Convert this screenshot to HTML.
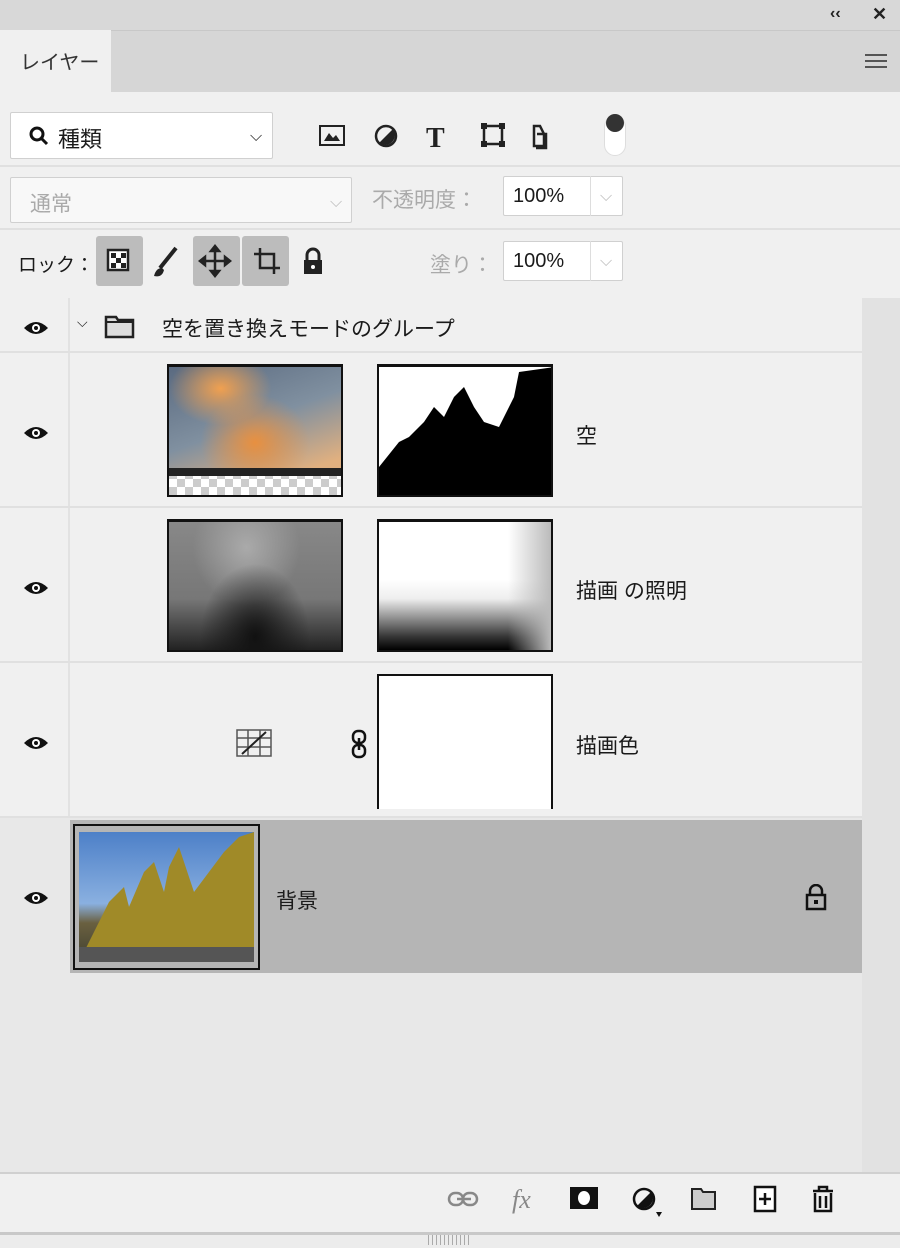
<!DOCTYPE html><html><head><meta charset="utf-8"><style>
*{margin:0;padding:0;box-sizing:border-box}
body{width:900px;height:1248px;background:#f0f0f0;font-family:"Liberation Sans","Noto Sans CJK JP",sans-serif;position:relative;overflow:hidden;color:#222}
.a{position:absolute}
.t{font-size:21px;color:#1a1a1a}
.box{background:#fff;border:1px solid #d0d0d0;border-radius:2px}
.eye{position:absolute;left:23px;width:26px;height:16px}
.hl{position:absolute;left:0;width:862px;height:2px;background:#e0e0e0}
</style></head><body>
<div class="a" style="left:0;top:0;width:900px;height:30px;background:#d8d8d8"></div>
<div class="a" style="left:830px;top:5px;font-size:16px;font-weight:bold">‹‹</div>
<div class="a" style="left:872px;top:4px;font-size:18px;font-weight:bold">✕</div>
<div class="a" style="left:0;top:30px;width:900px;height:62px;background:#d6d6d6;border-top:1px solid #c8c8c8"></div>
<div class="a" style="left:0;top:30px;width:111px;height:64px;background:#f0f0f0"></div>
<div class="a t" style="left:20px;top:46px;font-size:20px;color:#333">レイヤー</div>
<div class="a" style="left:865px;top:54px;width:22px;height:14px;border-top:2px solid #555;border-bottom:2px solid #555"></div>
<div class="a" style="left:865px;top:60px;width:22px;height:2px;background:#555"></div>
<!-- filter row -->
<div class="a box" style="left:10px;top:112px;width:263px;height:47px"></div>
<svg class="a" style="left:28px;top:125px" width="22" height="22"><circle cx="9" cy="9" r="6" fill="none" stroke="#111" stroke-width="3"/><path d="M13 13l6 6" stroke="#111" stroke-width="3"/></svg>
<div class="a t" style="left:58px;top:122px;font-size:22px">種類</div>
<div class="a" style="left:250px;top:128px;font-size:16px">⌵</div>
<svg class="a" style="left:318px;top:122px" width="230" height="28">
<rect x="2" y="4" width="24" height="19" fill="none" stroke="#222" stroke-width="2"/><path d="M6 19l5-8 4 5 3-3 4 6z" fill="#222"/>
<circle cx="68" cy="14" r="10" fill="none" stroke="#222" stroke-width="2.5"/><path d="M61 21L75 7A10 10 0 0 1 61 21z" fill="#222"/>
<text x="108" y="25" font-family="Liberation Serif" font-weight="bold" font-size="28" fill="#222">T</text>
<rect x="166" y="4" width="18" height="18" fill="none" stroke="#222" stroke-width="2.5"/><g fill="#222"><rect x="163" y="1" width="6" height="6"/><rect x="181" y="1" width="6" height="6"/><rect x="163" y="19" width="6" height="6"/><rect x="181" y="19" width="6" height="6"/></g>
<path d="M222 4h-6v20h10V12zM219 12h9v14h-10" fill="none" stroke="#222" stroke-width="2.5"/>
</svg>
<div class="a" style="left:604px;top:116px;width:22px;height:40px;border-radius:11px;background:#fff;border:1px solid #ddd"></div>
<div class="a" style="left:606px;top:114px;width:18px;height:18px;border-radius:9px;background:#333"></div>
<div class="hl" style="top:165px;width:900px"></div>
<!-- blend row -->
<div class="a box" style="left:10px;top:177px;width:342px;height:46px;background:#f8f8f8"></div>
<div class="a t" style="left:30px;top:188px;color:#aaa">通常</div>
<div class="a" style="left:330px;top:194px;color:#bbb">⌵</div>
<div class="a t" style="left:372px;top:184px;color:#aaa">不透明度：</div>
<div class="a box" style="left:503px;top:176px;width:120px;height:40px"></div>
<div class="a" style="left:590px;top:176px;width:1px;height:40px;background:#ddd"></div>
<div class="a t" style="left:513px;top:185px;font-size:20px">100%</div>
<div class="a" style="left:600px;top:188px;color:#bbb">⌵</div>
<div class="hl" style="top:228px;width:900px"></div>
<!-- lock row -->
<div class="a t" style="left:18px;top:250px;font-size:19px">ロック：</div>
<div class="a" style="left:96px;top:236px;width:47px;height:50px;background:#bcbcbc;border-radius:3px"></div>
<div class="a" style="left:193px;top:236px;width:47px;height:50px;background:#bcbcbc;border-radius:3px"></div>
<div class="a" style="left:242px;top:236px;width:47px;height:50px;background:#bcbcbc;border-radius:3px"></div>
<svg class="a" style="left:96px;top:236px" width="240" height="50">
<rect x="12" y="14" width="20" height="20" fill="#fff" stroke="#222" stroke-width="2.5"/><g fill="#222"><rect x="15" y="17" width="5" height="5"/><rect x="25" y="17" width="5" height="5"/><rect x="20" y="22" width="5" height="5"/><rect x="15" y="27" width="5" height="5"/><rect x="25" y="27" width="5" height="5"/></g>
<path d="M80 12L64 32" stroke="#222" stroke-width="4"/><path d="M58 40q2-8 8-8l2 2q-2 8-10 6z" fill="#222"/>
<path d="M119 12v26M106 25h26M119 10l-4 5h8zM119 40l-4-5h8zM104 25l5-4v8zM134 25l-5-4v8z" stroke="#222" stroke-width="2.5" fill="#222"/>
<path d="M158 18h20v20M164 12v20h20" fill="none" stroke="#222" stroke-width="2.5"/>
<rect x="208" y="24" width="18" height="14" fill="#222"/><path d="M211 24v-5a6 6 0 0 1 12 0v5" fill="none" stroke="#222" stroke-width="3"/><circle cx="217" cy="31" r="2" fill="#fff"/>
</svg>
<div class="a t" style="left:430px;top:249px;color:#aaa">塗り：</div>
<div class="a box" style="left:503px;top:241px;width:120px;height:40px"></div>
<div class="a" style="left:590px;top:241px;width:1px;height:40px;background:#ddd"></div>
<div class="a t" style="left:513px;top:250px;font-size:20px">100%</div>
<div class="a" style="left:600px;top:253px;color:#bbb">⌵</div>
<!-- list -->
<div class="a" style="left:0;top:298px;width:900px;height:874px;background:#e8e8e8"></div>
<div class="a" style="left:862px;top:298px;width:38px;height:874px;background:#e2e2e2"></div>
<div class="a" style="left:0;top:298px;width:862px;height:520px;background:#f0f0f0"></div>
<div class="a" style="left:68px;top:298px;width:2px;height:520px;background:#e2e2e2"></div>
<div class="hl" style="top:351px"></div><div class="hl" style="top:506px"></div><div class="hl" style="top:661px"></div><div class="hl" style="top:816px"></div>
<svg width="0" height="0" style="position:absolute"><defs><g id="e"><path d="M1 8Q13-4 25 8Q13 20 1 8z" fill="#111"/><circle cx="13" cy="8" r="4" fill="#fff"/><circle cx="13" cy="8" r="2" fill="#111"/></g></defs></svg>
<svg class="eye" style="top:320px"><use href="#e"/></svg>
<svg class="eye" style="top:425px"><use href="#e"/></svg>
<svg class="eye" style="top:580px"><use href="#e"/></svg>
<svg class="eye" style="top:735px"><use href="#e"/></svg>
<svg class="eye" style="top:890px"><use href="#e"/></svg>
<div class="a" style="left:77px;top:314px;font-size:14px">⌵</div>
<svg class="a" style="left:104px;top:315px" width="32" height="24"><path d="M2 2h10l2 3h15v17H2z" fill="#ddd" stroke="#222" stroke-width="2.5"/><path d="M2 7h27" stroke="#222" stroke-width="2"/></svg>
<div class="a t" style="left:162px;top:313px">空を置き換えモードのグループ</div>
<!-- sky -->
<div class="a" style="left:167px;top:364px;width:176px;height:133px;border:2px solid #111;border-top-width:3px;background:repeating-conic-gradient(#ccc 0 25%,#fff 0 50%) 0 0/16px 16px"></div>
<div class="a" style="left:169px;top:367px;width:172px;height:108px;background:radial-gradient(ellipse at 30% 20%,#f0a050 0,transparent 30%),radial-gradient(ellipse at 50% 70%,#e89040 0,transparent 45%),linear-gradient(160deg,#5a6a80,#8090a0 50%,#e0b080 90%)"></div>
<div class="a" style="left:169px;top:468px;width:172px;height:8px;background:#222"></div>
<div class="a" style="left:377px;top:364px;width:176px;height:133px;border:2px solid #111;border-top-width:3px;background:#fff;overflow:hidden">
<svg width="176" height="133"><path d="M0 100L20 75 30 70 45 55 55 40 65 50 75 30 85 20 95 40 105 55 120 60 135 30 140 5 176 0V133H0z" fill="#000"/></svg></div>
<div class="a t" style="left:576px;top:420px">空</div>
<!-- lighting -->
<div class="a" style="left:167px;top:519px;width:176px;height:133px;border:2px solid #111;border-top-width:3px;background:radial-gradient(ellipse at 50% 90%,#111 0,transparent 45%),radial-gradient(ellipse at 45% 20%,#aaa 0,transparent 40%),linear-gradient(#888,#777 60%,#222)"></div>
<div class="a" style="left:377px;top:519px;width:176px;height:133px;border:2px solid #111;border-top-width:3px;background:linear-gradient(to right,transparent 75%,#bbb),linear-gradient(#fff 45%,#eee 60%,#333 90%,#000)"></div>
<div class="a t" style="left:576px;top:575px">描画 の照明</div>
<!-- color -->
<svg class="a" style="left:236px;top:729px" width="36" height="28"><path d="M1 1h34v26H1zM1 9h34M1 18h34M12 1v26M24 1v26" fill="none" stroke="#555" stroke-width="1.5"/><path d="M6 25L30 3" stroke="#222" stroke-width="2"/></svg>
<svg class="a" style="left:350px;top:729px" width="18" height="30"><rect x="3" y="2" width="12" height="12" rx="5" fill="none" stroke="#111" stroke-width="2.5"/><rect x="3" y="16" width="12" height="12" rx="5" fill="none" stroke="#111" stroke-width="2.5"/><path d="M9 9v12" stroke="#111" stroke-width="2.5"/></svg>
<div class="a" style="left:377px;top:674px;width:176px;height:135px;border:2px solid #111;border-bottom:none;background:#fff"></div>
<div class="a t" style="left:576px;top:730px">描画色</div>
<!-- background -->
<div class="a" style="left:70px;top:820px;width:792px;height:153px;background:#b5b5b5"></div>
<div class="a" style="left:73px;top:824px;width:187px;height:146px;border:2px solid #111"></div>
<div class="a" style="left:79px;top:832px;width:175px;height:130px;background:linear-gradient(#4d80c8,#8ab0e0 55%,#6a6040 70%,#404030);overflow:hidden">
<svg width="175" height="130"><path d="M10 110L30 70 45 55 50 75 65 40 75 30 85 60 90 35 100 15 115 60 130 40 145 20 160 5 175 0V130H0z" fill="#a08a28"/><path d="M0 115h175v15H0z" fill="#555"/></svg></div>
<div class="a t" style="left:276px;top:885px">背景</div>
<svg class="a" style="left:804px;top:884px" width="24" height="28"><rect x="3" y="11" width="18" height="14" fill="none" stroke="#111" stroke-width="2.5"/><path d="M6 11V7a6 6 0 0 1 12 0v4" fill="none" stroke="#111" stroke-width="2.5"/><rect x="10" y="16" width="4" height="4" fill="#111"/></svg>
<!-- bottom -->
<div class="a" style="left:0;top:1172px;width:900px;height:2px;background:#d0d0d0"></div>
<svg class="a" style="left:440px;top:1180px" width="410" height="44">
<g fill="none" stroke="#888" stroke-width="2.5"><rect x="9" y="13" width="14" height="12" rx="6"/><rect x="23" y="13" width="14" height="12" rx="6"/><path d="M17 19h14"/></g>
<text x="72" y="28" font-family="Liberation Serif" font-style="italic" font-size="26" fill="#888">fx</text>
<rect x="130" y="7" width="28" height="22" fill="#111"/><ellipse cx="144" cy="18" rx="6" ry="7" fill="#fff"/>
<circle cx="204" cy="19" r="10" fill="none" stroke="#111" stroke-width="2.5"/><path d="M197 26L211 12A10 10 0 0 1 197 26z" fill="#111"/><path d="M216 32l3 5 3-5z" fill="#111"/>
<path d="M252 9h9l2 3h12v17h-23z" fill="#ccc" stroke="#222" stroke-width="2"/>
<rect x="315" y="7" width="20" height="24" fill="#fff" stroke="#111" stroke-width="2.5"/><path d="M325 13v12M319 19h12" stroke="#111" stroke-width="2.5"/>
<path d="M373 11h20M379 11V7h8v4M375 13v18h16V13M380 16v12M386 16v12" fill="none" stroke="#111" stroke-width="2.5"/>
<path d="M499 38" />
</svg>
<div class="a" style="left:0;top:1232px;width:900px;height:3px;background:#c8c8c8"></div>
<div class="a" style="left:0;top:1235px;width:900px;height:13px;background:#ececec"></div>
<div class="a" style="left:428px;top:1235px;width:44px;height:10px;background:repeating-linear-gradient(to right,#aaa 0 1px,transparent 1px 4px)"></div>
</body></html>
